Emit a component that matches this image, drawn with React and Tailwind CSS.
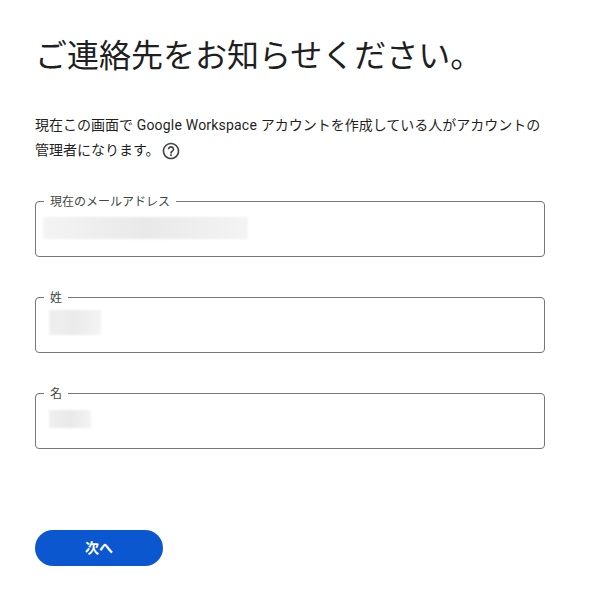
const font = { fontFamily: '"Roboto", "Noto Sans CJK JP", sans-serif' };

function Field({ label, blurClass }) {
  return (
    <fieldset className="h-[63px] rounded-[4px] border border-[#747775] pl-[7px] pr-2 min-w-0">
      <legend className="ml-[1px] px-[6px] text-[12px] leading-[14px] text-[#444746] translate-y-[1px]">{label}</legend>
      <div className={blurClass} />
    </fieldset>
  );
}

export default function App() {
  return (
    <div style={font} className="w-[605px] h-[593px] bg-white pl-[35px] pr-[60px] pt-[34px] text-[#1f1f1f] overflow-hidden">
      <h1 className="text-[32px] leading-[44px] font-normal">ご連絡先をお知らせください。</h1>
      <div className="mt-[35px] text-[14px] leading-[25px] text-[#1f1f1f] whitespace-nowrap">
        <p className="h-[25px]">現在この画面で<span className="tracking-[0.2px]"> Google Workspace </span>アカウントを作成している人がアカウントの</p>
        <p className="h-[25px] flex items-center">
          管理者になります。
          <svg className="ml-[1px]" width="20" height="20" viewBox="0 0 24 24" fill="#444746">
            <path d="M11 18h2v-2h-2v2zm1-16C6.48 2 2 6.48 2 12s4.48 10 10 10 10-4.48 10-10S17.52 2 12 2zm0 18c-4.41 0-8-3.59-8-8s3.59-8 8-8 8 3.59 8 8-3.590 8-8 8zm0-14c-2.21 0-4 1.790-4 4h2c0-1.100.9-2 2-2s2 .9 2 2c0 2-3 1.750-3 5h2c0-2.250 3-2.500 3-5 0-2.210-1.790-4-4-4z" />
          </svg>
        </p>
      </div>
      <div className="mt-[31px] flex flex-col gap-[33px]">
        <Field label="現在のメールアドレス" blurClass="mt-[9px] h-[22px] w-[205px] bg-linear-to-r from-[#f4f4f4] via-[#e9e9e9] to-[#f4f4f4] blur-[1px]" />
        <Field label="姓" blurClass="mt-[6px] ml-[6px] h-[25px] w-[52px] bg-linear-to-r from-[#efefef] via-[#ebebeb] to-[#f4f4f4] blur-[1px]" />
        <Field label="名" blurClass="mt-[10px] ml-[6px] h-[18px] w-[42px] bg-linear-to-r from-[#efefef] via-[#e9e9e9] to-[#f4f4f4] blur-[1px]" />
      </div>
      <button className="mt-[81px] block h-[36px] w-[128px] rounded-full bg-[#0b57d0] text-[14px] font-bold text-white">
        次へ
      </button>
    </div>
  );
}
